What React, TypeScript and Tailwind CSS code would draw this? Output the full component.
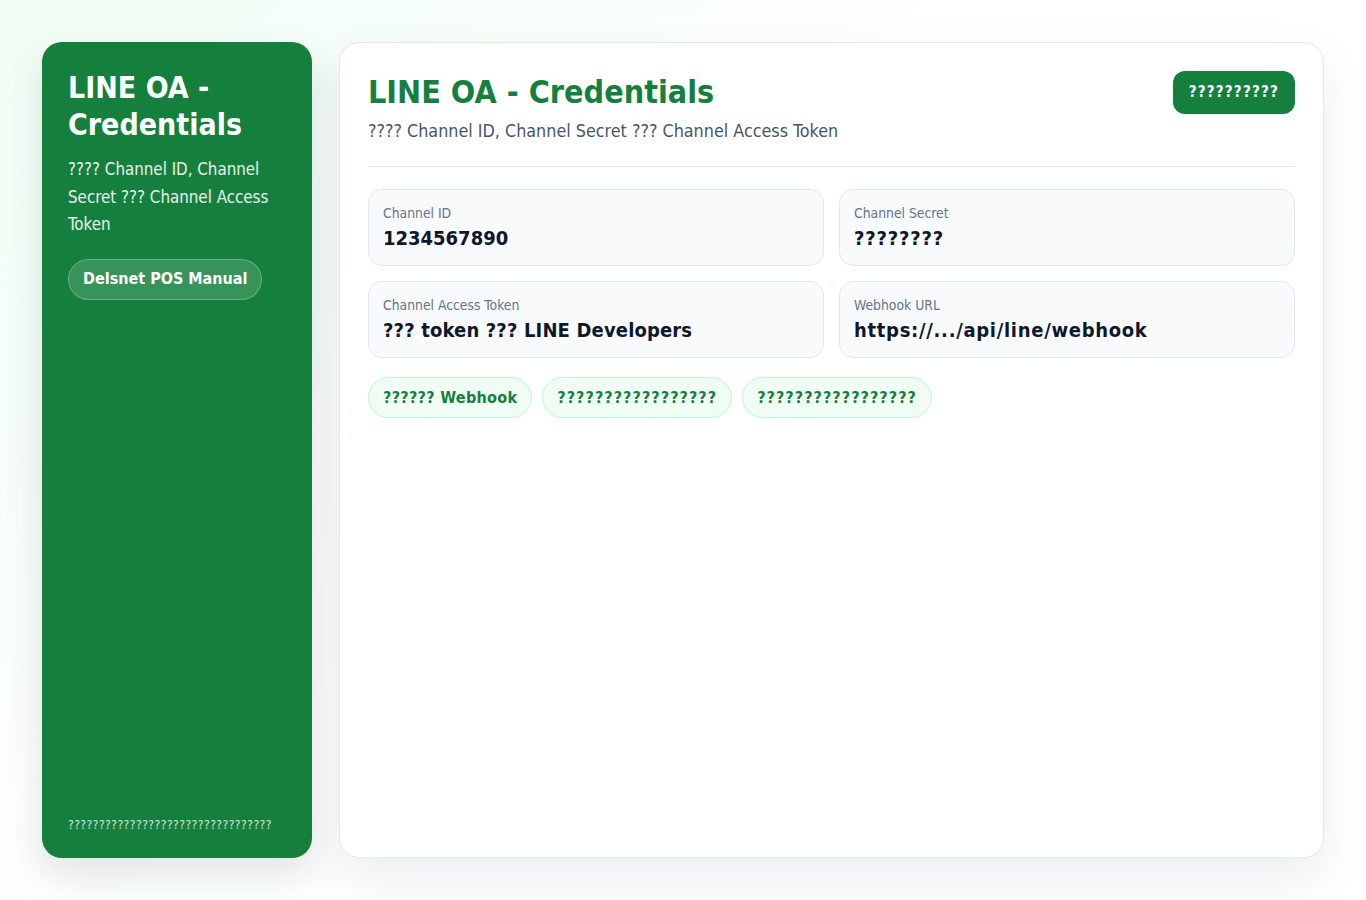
import type { ReactNode } from 'react';

const font = { fontFamily: '"DejaVu Sans Condensed", "DejaVu Sans", sans-serif' };

interface FieldProps {
  label: string;
  value: ReactNode;
  valueClass?: string;
}

function Field({ label, value, valueClass = '' }: FieldProps) {
  return (
    <div className="rounded-[14px] border border-[#e2e8f0] bg-[#f8fafc] px-[14px] pt-[14px] pb-[14px]">
      <div className="text-[13.8px] leading-[18px] text-[#64748b]">{label}</div>
      <div className={`mt-[3px] text-[20px] leading-[26px] font-bold text-[#0f172a] ${valueClass}`}>{value}</div>
    </div>
  );
}

function Chip({ children, className = '' }: { children: ReactNode; className?: string }) {
  return (
    <span
      className={`inline-flex h-[41px] items-center rounded-full border border-[#bbf7d0] bg-[#f0fdf4] px-[14px] text-[16px] font-bold text-[#15803d] ${className}`}
    >
      {children}
    </span>
  );
}

export default function App() {
  return (
    <div
      className="flex h-screen gap-[27px] bg-[linear-gradient(135deg,#f0fdf4_0%,#ffffff_45%,#ffffff_100%)] p-[42px]"
      style={font}
    >
      {/* Sidebar */}
      <aside className="flex w-[270px] shrink-0 flex-col rounded-[20px] bg-[#15803d] px-[26px] pt-[27px] pb-[25px] text-white shadow-[0_18px_40px_rgba(15,23,42,0.12)]">
        <h1 className="text-[30px] leading-[37px] font-bold">LINE OA - Credentials</h1>
        <p className="mt-[13px] text-[16.8px] leading-[27.5px] text-white/90">
          ???? Channel ID, Channel Secret ??? Channel Access Token
        </p>
        <div className="mt-[20px]">
          <span className="inline-flex h-[41px] items-center rounded-full border border-white/25 bg-white/15 px-[14px] text-[16px] font-bold">
            Delsnet POS Manual
          </span>
        </div>
        <div className="mt-auto text-[12px] leading-[16px] tracking-[0.45px] text-white/80">
          ?????????????????????????????????
        </div>
      </aside>

      {/* Main panel */}
      <main className="flex-1 rounded-[20px] border border-[#e2e8f0] bg-white px-[28px] pt-[28px] shadow-[0_20px_50px_rgba(15,23,42,0.08)]">
        <div className="flex items-start justify-between border-b border-[#e2e8f0] pb-[23px]">
          <div>
            <h2 className="text-[32px] leading-[42px] font-bold text-[#15803d]">LINE OA - Credentials</h2>
            <p className="mt-[6px] text-[17.8px] leading-[24px] text-[#475569]">
              ???? Channel ID, Channel Secret ??? Channel Access Token
            </p>
          </div>
          <button className="h-[43px] rounded-[12px] bg-[#15803d] px-[16px] text-[15px] font-bold tracking-[1.2px] text-white">
            ??????????
          </button>
        </div>

        <div className="mt-[22px] grid grid-cols-2 gap-[15px]">
          <Field label="Channel ID" value="1234567890" />
          <Field label="Channel Secret" value="????????" valueClass="tracking-[0.8px]" />
          <Field label="Channel Access Token" value="??? token ??? LINE Developers" valueClass="tracking-[0.15px]" />
          <Field label="Webhook URL" value="https://.../api/line/webhook" valueClass="tracking-[0.7px]" />
        </div>

        <div className="mt-[19px] flex gap-[10px]">
          <Chip className="tracking-[0.3px]">?????? Webhook</Chip>
          <Chip className="tracking-[1.05px]">?????????????????</Chip>
          <Chip className="tracking-[1.05px]">?????????????????</Chip>
        </div>
      </main>
    </div>
  );
}
